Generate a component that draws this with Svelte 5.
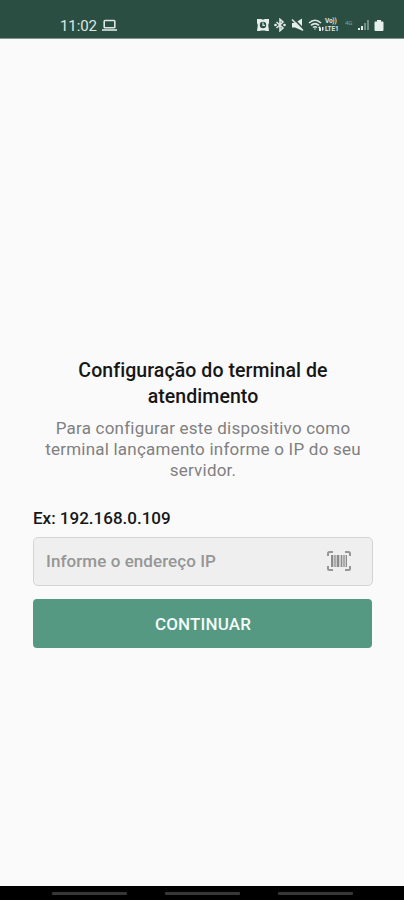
<script>
	let address = $state('')

	const title = 'Configuração do terminal de atendimento'
	const description =
		'Para configurar este dispositivo como terminal lançamento informe o IP do seu servidor.'
	const example = '192.168.0.109'
	const navHints = ['recents', 'home', 'back']
</script>

<div class="screen">
	<header class="status-bar">
		<div class="clock">
			<span class="time">11:02</span>
			<svg width="17" height="13" viewBox="0 0 17 13">
				<rect x="3.2" y="1.5" width="10.6" height="7.2" rx="0.8" />
				<path d="M1 11h15" />
			</svg>
		</div>
		<div class="indicators">
			<!-- alarm -->
			<svg class="alarm" width="14" height="14" viewBox="0 0 14 14">
				<path class="fill" d="M1 1h4l2 .8L9 1h4v4l-.8 2 .8 6h-3l-1-.6H5L4 13H1l.8-6L1 5z" />
				<circle class="hole" cx="7" cy="7" r="3.2" />
				<path class="thin" d="M7 4.500V7.300H9" />
			</svg>
			<!-- bluetooth -->
			<svg class="bluetooth" width="12" height="14" viewBox="0 0 12 14">
				<path d="M2.500 4l6.500 6-3 2.700V1.300L9 4 2.500 10" />
				<circle class="fill" cx="1.500" cy="7" r="1.300" />
				<circle class="fill" cx="10.500" cy="7" r="1.300" />
			</svg>
			<!-- sound off -->
			<svg class="mute" width="13" height="14" viewBox="0 0 13 14">
				<path class="fill" d="M1 5h3l7-4.500v12L4 9.500H1z" />
				<path class="cut" d="M2.500 .5l10.500 11" />
				<path d="M1 1.500l11 11" />
			</svg>
			<!-- wifi -->
			<svg class="wifi" width="16" height="14" viewBox="0 0 16 14">
				<path d="M1 5q6-5.500 12 0M3 7.400q4-3.700 8 0M5 9.500q2-1.600 4 0" />
				<path class="fill" d="M6 10.500h2l-1 1.500zM10 10l1.500-1.700L13 10v3h-2v-3zM14 9h1.500v3L14 13z" />
			</svg>
			<span class="volte"><b>Vo))</b><b>LTE1</b></span>
			<span class="network">4G</span>
			<!-- signal -->
			<svg class="signal" width="12" height="12" viewBox="0 0 12 12">
				<path class="fill" d="M0 9h2v2H0zM3 7h2v4H3z" />
				<path class="fill dim" d="M6 4h2v7H6zM9 1h2v10H9z" />
			</svg>
			<!-- battery -->
			<svg class="battery" width="10" height="13" viewBox="0 0 10 13">
				<path class="fill" d="M3 1h4v1.500h1.500q1 0 1 1V11q0 1-1 1h-7q-1 0-1-1V3.500q0-1 1-1H3z" />
			</svg>
		</div>
	</header>

	<main class="content">
		<h1>{title}</h1>
		<p class="description">{description}</p>

		<label for="address">Ex: {example}</label>
		<div class="field">
			<input id="address" type="text" placeholder="Informe o endereço IP" bind:value={address} />
			<button class="scan" aria-label="Ler código">
				<svg width="26" height="22" viewBox="0 0 26 22">
					<path class="corner" d="M2 6V3.500q0-1.500 1.500-1.500H7M19 2h3.500Q24 2 24 3.500V6M24 16v2.500q0 1.500-1.500 1.500H19M7 20H3.500Q2 20 2 18.500V16" />
					<path class="bars light" d="M5 5h16v12H5z" />
					<path class="bars" d="M5 5h2v12H5zM8.500 5h1v12h-1zM11 5h2v12h-2zM15 5h1v12h-1zM17.500 5h1v12h-1zM20 5h1v12h-1z" />
				</svg>
			</button>
		</div>
		<button class="continue">CONTINUAR</button>
	</main>

	<footer class="nav-bar">
		{#each navHints as hint (hint)}
			<span class="hint"></span>
		{/each}
	</footer>
</div>

<style>
	:global(body) {
		margin: 0;
	}

	.screen {
		display: flex;
		flex-direction: column;
		box-sizing: border-box;
		height: 900px;
		background: #fafafa;
		font-family: Roboto, 'Liberation Sans', sans-serif;
	}

	.status-bar {
		display: flex;
		justify-content: space-between;
		box-sizing: border-box;
		height: 39px;
		padding: 12px 20px 0 60px;
		border-bottom: 1px solid #83958f;
		background: #2b4e43;
		color: #dce7e3;
	}

	.clock,
	.indicators {
		display: flex;
		align-items: center;
		height: 27px;
	}

	.indicators {
		height: 26px;
	}

	.time {
		width: 41px;
		font-size: 15px;
		letter-spacing: -0.1px;
	}

	.status-bar svg {
		fill: none;
		stroke: #dce7e3;
		stroke-width: 1.6;
	}

	.status-bar .fill {
		fill: #e6efec;
		stroke: none;
	}

	.status-bar .hole {
		fill: #2b4e43;
		stroke: none;
	}

	.status-bar .thin {
		stroke-width: 1.2;
	}

	.status-bar .cut {
		stroke: #2b4e43;
	}

	.status-bar .dim {
		opacity: 0.4;
	}

	.bluetooth {
		margin-left: 4px;
	}

	.mute {
		margin-left: 5px;
	}

	.wifi {
		margin-left: 4px;
	}

	.volte {
		display: flex;
		flex-direction: column;
		width: 16px;
		margin-left: 1px;
		font-size: 6.5px;
		line-height: 8px;
		letter-spacing: -0.2px;
	}

	.network {
		width: 9px;
		margin: -5px 4px 0 4px;
		font-size: 6px;
		opacity: 0.5;
	}

	.battery {
		margin-left: 4px;
	}

	.content {
		display: flex;
		flex: 1;
		flex-direction: column;
		padding: 319px 31px 0 33px;
	}

	h1 {
		margin: 0;
		color: #161616;
		font-size: 19.5px;
		font-weight: 500;
		line-height: 26px;
		letter-spacing: 0.07px;
		text-align: center;
	}

	.description {
		margin: 8px 0 0;
		color: #808080;
		font-size: 17px;
		line-height: 21px;
		letter-spacing: 0.22px;
		text-align: center;
	}

	label {
		margin-top: 26px;
		color: #161616;
		font-size: 17px;
		font-weight: 500;
		line-height: 22px;
	}

	.field {
		display: flex;
		align-items: center;
		box-sizing: border-box;
		height: 49px;
		margin-top: 8px;
		padding: 0 20px 2px 12px;
		border: 1px solid #d4d4d4;
		border-radius: 5px;
		background: #efefef;
	}

	input {
		flex: 1;
		min-width: 0;
		padding: 0;
		border: 0;
		outline: 0;
		background: none;
		color: #161616;
		font: 500 17px Roboto, 'Liberation Sans', sans-serif;
		letter-spacing: 0.07px;
	}

	input::placeholder {
		color: #969696;
	}

	.scan {
		display: flex;
		padding: 0;
		border: 0;
		background: none;
	}

	.corner {
		fill: none;
		stroke: #969696;
		stroke-width: 2;
	}

	.bars {
		fill: #8c8c8c;
	}

	.light {
		opacity: 0.35;
	}

	.continue {
		height: 49px;
		margin: 13px 1px 0 0;
		padding: 0 0 0 1px;
		border: 0;
		border-radius: 4px;
		background: #559983;
		color: #f4faf8;
		font: 500 17px Roboto, 'Liberation Sans', sans-serif;
		letter-spacing: 0.15px;
	}

	.nav-bar {
		display: flex;
		justify-content: center;
		gap: 38px;
		box-sizing: border-box;
		height: 14px;
		padding-top: 6px;
		background: #000;
	}

	.hint {
		width: 75px;
		height: 3px;
		border-radius: 1px;
		background: #373737;
	}
</style>
